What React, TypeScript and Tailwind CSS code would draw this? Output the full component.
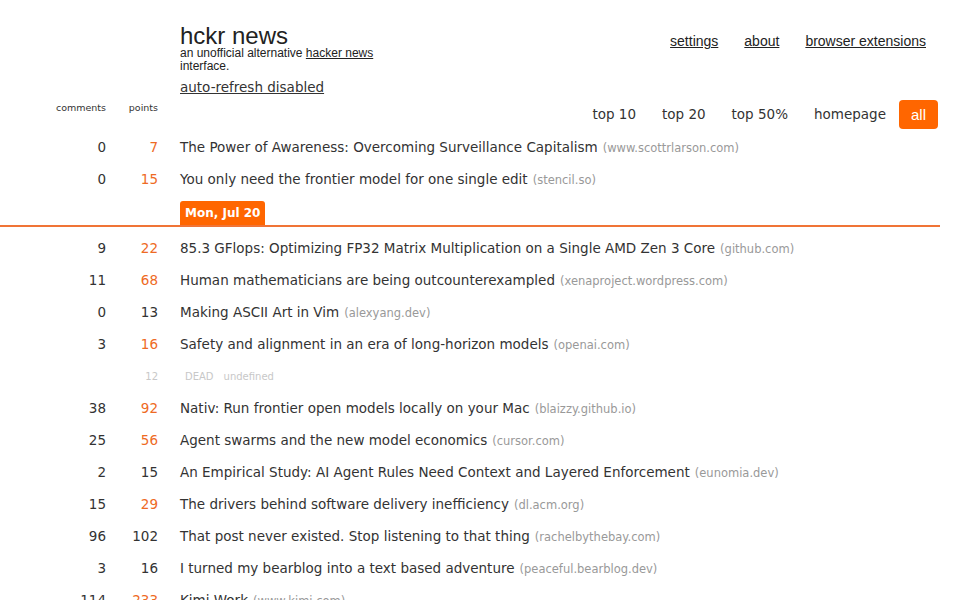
import React from "react";

type Story = {
  comments?: number;
  points: number;
  hot?: boolean;
  title: string;
  domain: string;
  dead?: boolean;
};

const before: Story[] = [
  { comments: 0, points: 7, hot: true, title: "The Power of Awareness: Overcoming Surveillance Capitalism", domain: "www.scottrlarson.com" },
  { comments: 0, points: 15, hot: true, title: "You only need the frontier model for one single edit", domain: "stencil.so" },
];

const after: Story[] = [
  { comments: 9, points: 22, hot: true, title: "85.3 GFlops: Optimizing FP32 Matrix Multiplication on a Single AMD Zen 3 Core", domain: "github.com" },
  { comments: 11, points: 68, hot: true, title: "Human mathematicians are being outcounterexampled", domain: "xenaproject.wordpress.com" },
  { comments: 0, points: 13, title: "Making ASCII Art in Vim", domain: "alexyang.dev" },
  { comments: 3, points: 16, hot: true, title: "Safety and alignment in an era of long-horizon models", domain: "openai.com" },
  { points: 12, title: "DEAD", domain: "undefined", dead: true },
  { comments: 38, points: 92, hot: true, title: "Nativ: Run frontier open models locally on your Mac", domain: "blaizzy.github.io" },
  { comments: 25, points: 56, hot: true, title: "Agent swarms and the new model economics", domain: "cursor.com" },
  { comments: 2, points: 15, title: "An Empirical Study: AI Agent Rules Need Context and Layered Enforcement", domain: "eunomia.dev" },
  { comments: 15, points: 29, hot: true, title: "The drivers behind software delivery inefficiency", domain: "dl.acm.org" },
  { comments: 96, points: 102, title: "That post never existed. Stop listening to that thing", domain: "rachelbythebay.com" },
  { comments: 3, points: 16, title: "I turned my bearblog into a text based adventure", domain: "peaceful.bearblog.dev" },
  { comments: 114, points: 233, hot: true, title: "Kimi Work", domain: "www.kimi.com" },
];

function Row({ s }: { s: Story }) {
  if (s.dead) {
    return (
      <div className="flex h-[32px] items-center text-[10px] text-[#c8c8c8]">
        <span className="w-[106px] text-right" />
        <span className="w-[52px] text-right">{s.points}</span>
        <span className="ml-[27px]">{s.title}</span>
        <span className="ml-[10px]">{s.domain}</span>
      </div>
    );
  }
  return (
    <div className="flex h-[32px] items-center text-[13.5px] leading-[16px]">
      <span className="w-[106px] text-right text-[#333]">{s.comments}</span>
      <span className={`w-[52px] text-right ${s.hot ? "text-[#ee6a24]" : "text-[#333]"}`}>{s.points}</span>
      <span className="ml-[22px] whitespace-nowrap">
        <a className="text-[#333]">{s.title}</a>
        <span className="ml-[5px] text-[11.5px] text-[#999]">({s.domain})</span>
      </span>
    </div>
  );
}

const tabs = ["top 10", "top 20", "top 50%", "homepage"];

export default function App() {
  return (
    <div className="h-[600px] w-[960px] overflow-hidden bg-white font-['DejaVu_Sans',sans-serif] text-[#333]">
      <header className="flex h-[100px] justify-between pr-[34px]">
        <div className="pl-[180px] pt-[25px]">
          <h1 className="font-['Liberation_Sans',sans-serif] text-[24px] leading-[22px] text-[#222]">hckr news</h1>
          <p className="w-[200px] font-['Liberation_Sans',sans-serif] text-[12px] leading-[13px] text-[#222]">
            an unofficial alternative <a className="underline">hacker news</a> interface.
          </p>
          <a className="mt-[6px] block text-[13.5px] leading-[16px] underline">auto-refresh disabled</a>
        </div>
        <nav className="flex gap-[26px] pt-[33px] font-['Liberation_Sans',sans-serif] text-[14px] leading-[16px] text-[#222]">
          <a className="underline">settings</a>
          <a className="underline">about</a>
          <a className="underline">browser extensions</a>
        </nav>
      </header>

      <div className="flex h-[29px] items-start pr-[22px]">
        <div className="flex pt-[2px] text-[9.5px] leading-[12px] text-[#333]">
          <span className="w-[106px] text-right">comments</span>
          <span className="w-[52px] text-right">points</span>
        </div>
        <div className="ml-auto flex h-[29px] items-center text-[13.5px]">
          {tabs.map((t) => (
            <a key={t} className="px-[13px] leading-[29px] text-[#333]">{t}</a>
          ))}
          <a className="rounded-[4px] bg-[#ff6600] px-[12px] font-['Liberation_Sans',sans-serif] text-[15px] leading-[29px] text-white">all</a>
        </div>
      </div>

      <div className="mt-[2px]">
        {before.map((s) => (
          <Row key={s.title} s={s} />
        ))}
      </div>

      {/* day separator: orange date tab sitting on an orange rule */}
      <div className="mb-[5px] mt-[6px] w-[940px]">
        <div className="ml-[180px] flex h-[24px] w-fit items-center rounded-t-[3px] bg-[#ff6600] px-[5px] text-[12px] font-bold leading-[16px] text-white">
          Mon, Jul 20
        </div>
        <div className="h-[2px] w-full bg-[#f07436]" />
      </div>

      <div>
        {after.map((s) => (
          <Row key={s.title} s={s} />
        ))}
      </div>
    </div>
  );
}
